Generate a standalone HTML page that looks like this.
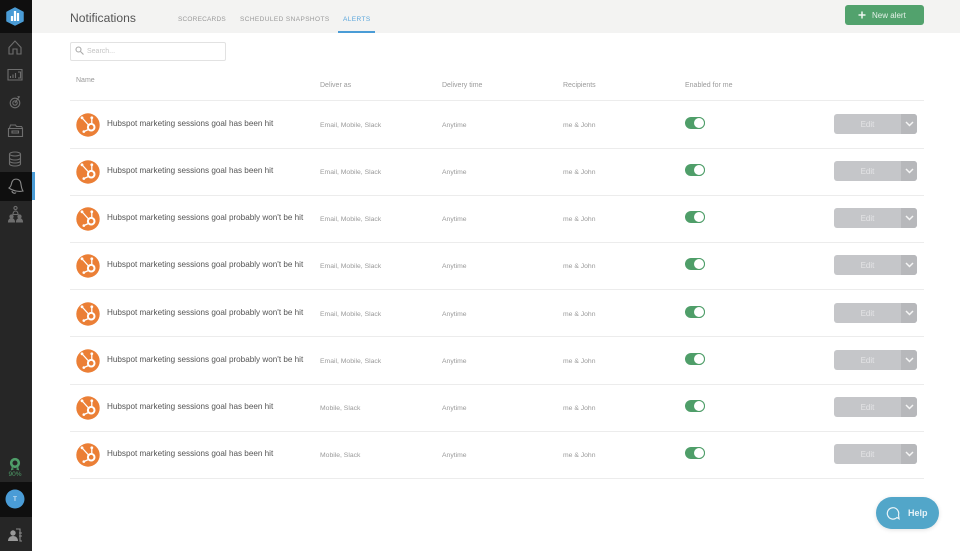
<!DOCTYPE html>
<html><head><meta charset="utf-8"><style>
*{box-sizing:border-box}
html,body{margin:0;padding:0;width:960px;height:551px;overflow:hidden;background:#fff;font-family:"Liberation Sans",sans-serif}
#p{position:relative;width:960px;height:551px;overflow:hidden;filter:blur(.3px)}
.a{position:absolute;white-space:nowrap}
.l{position:absolute;left:70px;width:854px;height:1px;background:#ececec}
.r{position:absolute;left:70px;width:854px;height:47px}
.r>*{position:absolute;white-space:nowrap}
.n{left:37px;top:17px;font-size:8.150px;line-height:12px;color:#555}
.s{top:19px;font-size:6.800px;line-height:12px;color:#9a9a9a}
.t{left:615px;top:16px;width:20px;height:12px;border-radius:6px;background:#4f9e69}
.t i{position:absolute;right:0;top:0;width:12px;height:12px;border-radius:50%;background:#fff;border:1px solid #4f9e69}
.e{left:764px;top:13px;width:83px;height:20px;border-radius:3px;background:#c5c6c9;color:#e4e4e6;font-size:8px;line-height:21px;text-align:center;padding-right:16px;overflow:hidden}
.e b{position:absolute;right:0;top:0;width:16px;height:20px;background:#b7b8bb}
.e svg{position:absolute;left:4px;top:6px}
.h{font-size:7px;line-height:10px;color:#9a9a9a}
.ic{left:5.500px;top:11.500px}
.tab{top:15px;font-size:6.500px;line-height:10px;letter-spacing:.4px;color:#999}
</style></head><body><div id="p">
<svg width="0" height="0" style="position:absolute"><defs>
<symbol id="hs" viewBox="0 0 24 24"><circle cx="12" cy="12" r="11.700" fill="#eb7f36"/><circle cx="15.200" cy="14.200" r="3.300" fill="none" stroke="#fff" stroke-width="2"/><path d="M15.800 10.500V5M12.500 12L6.200 5M12.500 16.500L8 18.500" stroke="#fff" stroke-width="1.300" fill="none"/><circle cx="15.800" cy="4.800" r="1.400" fill="#fff"/><circle cx="6" cy="4.800" r="1.400" fill="#fff"/><circle cx="7.800" cy="18.600" r="1.300" fill="#fff"/></symbol>
<symbol id="ch" viewBox="0 0 9 8"><path d="M1 2l3.500 3.500L8 2" fill="none" stroke="#f5f5f5" stroke-width="1.500"/></symbol>
</defs></svg>
<div class="a" style="left:32px;top:0;width:928px;height:33px;background:#f3f3f2"></div>
<div class="a" style="left:0;top:0;width:32px;height:551px;background:#262626"></div>
<div class="a" style="left:0;top:0;width:32px;height:33px;background:#0f0f0f"></div>
<div class="a" style="left:0;top:172px;width:32px;height:29px;background:#0f0f0f"></div>
<div class="a" style="left:32px;top:172px;width:3px;height:28px;background:#4a9cd6"></div>
<div class="a" style="left:0;top:482px;width:32px;height:35px;background:#0f0f0f"></div>
<svg class="a" style="left:0;top:0" width="32" height="551" viewBox="0 0 32 551" fill="none" stroke="#6e6e6e" stroke-width="1.100">
<path d="M15 8l8 4.300v8.700L15 25l-8-4v-8.700z" fill="#4a9cd6" stroke="#4a9cd6" stroke-width="1.500" stroke-linejoin="round"/>
<path d="M12 21v-5M15 21V11M18 21v-8" stroke="#fff" stroke-width="2.200"/>
<path d="M9 47.500L15 41l6 6.500V54h-4v-5h-4v5H9z"/>
<path d="M8 69.500h14v10.500H8zM10.500 78v-2M13 78v-3.500M15.500 78v-5M18 72h2.500v6H18"/>
<circle cx="15" cy="103" r="4.800"/><circle cx="15" cy="103" r="2.200"/><path d="M15 103l4-6M17.500 96.500l2.500.5"/>
<path d="M8.500 128.500h14v8h-14zM9.500 128l1-3h5l1 1.500h5l1 1.500M12 131h6.500v2H12z"/>
<ellipse cx="15" cy="154" rx="5.500" ry="2"/><path d="M9.500 154v10c0 1 2.500 2 5.500 2s5.500-1 5.500-2v-10M9.500 158c0 1 2.500 2 5.500 2s5.500-1 5.500-2M9.500 161c0 1 2.500 2 5.500 2s5.500-1 5.500-2"/>
<path d="M9 188C12 186 11 183 12.500 181 14 178.500 18 178.500 20 181 21.500 183 20.500 187 23 191 19 192 13 191 9 188zM12 191c0 2 3 3 4 1.500" stroke="#8a8a8a"/>
<circle cx="15.500" cy="208" r="1.600"/><path d="M13 214.500c0-2 1-3.500 2.500-3.500s2.500 1.500 2.500 3.500z"/>
<circle cx="11.500" cy="216.500" r="1.600" fill="#6e6e6e"/><circle cx="19.500" cy="216.500" r="1.600" fill="#6e6e6e"/>
<path d="M8.500 222c0-2 1.300-3.500 3-3.500s3 1.500 3 3.500zM16.500 222c0-2 1.300-3.500 3-3.500s3 1.500 3 3.500z" fill="#6e6e6e"/>
<circle cx="15" cy="463" r="3.800" stroke="#4f9e69" stroke-width="2.600"/><path d="M12.500 466.500l-.8 3 1.800-.7M17.500 466.500l.8 3-1.800-.7" stroke="#4f9e69" stroke-width="1.200"/>
<circle cx="15" cy="499" r="9.500" fill="#4a9cd6" stroke="none"/>
<circle cx="13" cy="533" r="2.700" fill="#9a9a9a" stroke="none"/><path d="M8 541c0-3 2-5 5-5s5 2 5 5z" fill="#9a9a9a" stroke="none"/><path d="M16 529h4v12h2M19 533h3M19 536h3" stroke="#8a8a8a"/>
</svg>
<div class="a" style="left:0;top:471px;width:30px;text-align:center;font-size:6.500px;line-height:8px;color:#4f9e69">90%</div>
<div class="a" style="left:0;top:496px;width:30px;text-align:center;font-size:6.500px;line-height:8px;color:#fff">T</div>

<div class="a" style="left:70px;top:10px;font-size:12.100px;line-height:16px;color:#555">Notifications</div>
<div class="a tab" style="left:178px;letter-spacing:.2px">SCORECARDS</div>
<div class="a tab" style="left:240px">SCHEDULED SNAPSHOTS</div>
<div class="a tab" style="left:343px;color:#5aa6dc">ALERTS</div>
<div class="a" style="left:338px;top:31px;width:37px;height:2px;background:#4a9cd6"></div>
<div class="a" style="left:845px;top:5px;width:79px;height:20px;border-radius:3px;background:#52a26d;color:#e4f1e8;font-size:8px;line-height:22px;padding-left:27px">New alert</div>
<svg class="a" style="left:858px;top:11px" width="8" height="8" viewBox="0 0 8 8"><path d="M4 .5v7M.5 4h7" stroke="#eef6f0" stroke-width="1.500"/></svg>

<div class="a" style="left:70px;top:42px;width:156px;height:19px;border:1px solid #e2e2e2;border-radius:2px"></div>
<svg class="a" style="left:75px;top:46px" width="9" height="9" viewBox="0 0 9 9" fill="none" stroke="#aaa" stroke-width="1.100"><circle cx="3.500" cy="3.500" r="2.500"/><path d="M5.500 5.500l3 3"/></svg>
<div class="a" style="left:87px;top:47px;font-size:7px;line-height:10px;color:#c4c4c4">Search...</div>

<div class="a h" style="left:76px;top:76px">Name</div>
<div class="a h" style="left:320px;top:81px">Deliver as</div>
<div class="a h" style="left:442px;top:81px">Delivery time</div>
<div class="a h" style="left:563px;top:81px">Recipients</div>
<div class="a h" style="left:685px;top:81px">Enabled for me</div>

<div class="l" style="top:100px"></div><div class="l" style="top:148px"></div><div class="l" style="top:195px"></div><div class="l" style="top:242px"></div><div class="l" style="top:289px"></div><div class="l" style="top:336px"></div><div class="l" style="top:384px"></div><div class="l" style="top:431px"></div><div class="l" style="top:478px"></div>

<div class="r" style="top:101px"><svg class="ic" width="24" height="24"><use href="#hs"/></svg><div class="n">Hubspot marketing sessions goal has been hit</div><div class="s" style="left:250px">Email, Mobile, Slack</div><div class="s" style="left:372px">Anytime</div><div class="s" style="left:493px">me &amp; John</div><div class="t"><i></i></div><div class="e">Edit<b><svg width="9" height="8"><use href="#ch"/></svg></b></div></div>
<div class="r" style="top:148px"><svg class="ic" width="24" height="24"><use href="#hs"/></svg><div class="n">Hubspot marketing sessions goal has been hit</div><div class="s" style="left:250px">Email, Mobile, Slack</div><div class="s" style="left:372px">Anytime</div><div class="s" style="left:493px">me &amp; John</div><div class="t"><i></i></div><div class="e">Edit<b><svg width="9" height="8"><use href="#ch"/></svg></b></div></div>
<div class="r" style="top:195px"><svg class="ic" width="24" height="24"><use href="#hs"/></svg><div class="n">Hubspot marketing sessions goal probably won't be hit</div><div class="s" style="left:250px">Email, Mobile, Slack</div><div class="s" style="left:372px">Anytime</div><div class="s" style="left:493px">me &amp; John</div><div class="t"><i></i></div><div class="e">Edit<b><svg width="9" height="8"><use href="#ch"/></svg></b></div></div>
<div class="r" style="top:242px"><svg class="ic" width="24" height="24"><use href="#hs"/></svg><div class="n">Hubspot marketing sessions goal probably won't be hit</div><div class="s" style="left:250px">Email, Mobile, Slack</div><div class="s" style="left:372px">Anytime</div><div class="s" style="left:493px">me &amp; John</div><div class="t"><i></i></div><div class="e">Edit<b><svg width="9" height="8"><use href="#ch"/></svg></b></div></div>
<div class="r" style="top:290px"><svg class="ic" width="24" height="24"><use href="#hs"/></svg><div class="n">Hubspot marketing sessions goal probably won't be hit</div><div class="s" style="left:250px">Email, Mobile, Slack</div><div class="s" style="left:372px">Anytime</div><div class="s" style="left:493px">me &amp; John</div><div class="t"><i></i></div><div class="e">Edit<b><svg width="9" height="8"><use href="#ch"/></svg></b></div></div>
<div class="r" style="top:337px"><svg class="ic" width="24" height="24"><use href="#hs"/></svg><div class="n">Hubspot marketing sessions goal probably won't be hit</div><div class="s" style="left:250px">Email, Mobile, Slack</div><div class="s" style="left:372px">Anytime</div><div class="s" style="left:493px">me &amp; John</div><div class="t"><i></i></div><div class="e">Edit<b><svg width="9" height="8"><use href="#ch"/></svg></b></div></div>
<div class="r" style="top:384px"><svg class="ic" width="24" height="24"><use href="#hs"/></svg><div class="n">Hubspot marketing sessions goal has been hit</div><div class="s" style="left:250px">Mobile, Slack</div><div class="s" style="left:372px">Anytime</div><div class="s" style="left:493px">me &amp; John</div><div class="t"><i></i></div><div class="e">Edit<b><svg width="9" height="8"><use href="#ch"/></svg></b></div></div>
<div class="r" style="top:431px"><svg class="ic" width="24" height="24"><use href="#hs"/></svg><div class="n">Hubspot marketing sessions goal has been hit</div><div class="s" style="left:250px">Mobile, Slack</div><div class="s" style="left:372px">Anytime</div><div class="s" style="left:493px">me &amp; John</div><div class="t"><i></i></div><div class="e">Edit<b><svg width="9" height="8"><use href="#ch"/></svg></b></div></div>

<div class="a" style="left:876px;top:497px;width:63px;height:32px;border-radius:16px;background:#52a6c9;color:#e8f3f8;font-size:9px;font-weight:bold;line-height:32px;padding-left:32px;box-shadow:0 1px 4px rgba(0,0,0,.12)">Help</div>
<svg class="a" style="left:886px;top:506px" width="15" height="15" viewBox="0 0 15 15" fill="none" stroke="#eaf4f8" stroke-width="1.200"><path d="M11 11.500l2 1.300-.5-3.800A5.700 5.700 0 1 0 11 11.500z"/></svg>
</div></body></html>
